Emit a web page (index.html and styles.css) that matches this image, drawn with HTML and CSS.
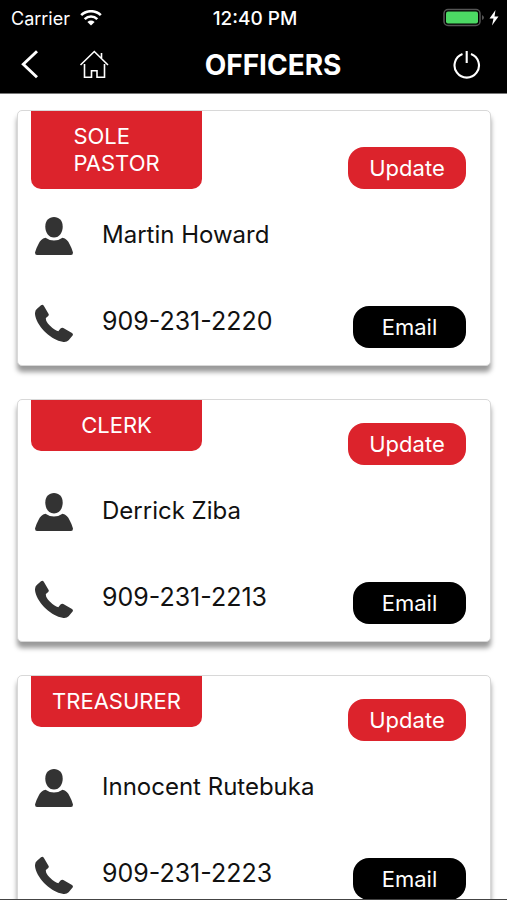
FILE: index.html
```html
<!DOCTYPE html>
<html lang="en">
<head>
<meta charset="utf-8">
<meta name="viewport" content="width=device-width, initial-scale=1">
<title>Officers</title>
<link rel="stylesheet" href="styles.css">
</head>
<body>
<svg class="sprite" aria-hidden="true">
  <symbol id="person" viewBox="0 0 38 38">
    <path d="M19 0C24 0 27.700 3.500 27.700 9.500C27.700 15.500 24.500 20.500 19 20.500S10.300 15.500 10.300 9.500C10.300 3.500 14 0 19 0Z"/>
    <path d="M10.500 20.800Q14 23.500 19 23.500T27.500 20.800Q32.500 22 34.500 27Q37 31.500 38 35.500Q38 38 36 38H2Q0 38 0 35.500Q1 31.500 3.500 27Q5.500 22 10.500 20.800Z"/>
  </symbol>
  <symbol id="phone" viewBox="0 0 38 38">
    <path d="M6 1.300Q7.500.200 8.800 1.700L13.600 10Q14.200 11.200 13.200 12L10.900 14.100Q10.400 17 14.500 21.200Q19.500 26.300 23.300 27.300L25.500 24.500Q26.800 23.500 28.300 24L37 29Q38.500 30.200 37.600 31.500L33.600 36.300Q31.500 38.500 27.500 37.800C17 36 3 24 .3 12Q-.8 7 2 4.700Z"/>
  </symbol>
</svg>
<div class="app">
  <header class="topbar">
    <div class="status">
      <div class="status-left">
        <span>Carrier</span>
        <svg class="wifi" viewBox="0 0 22 16" aria-hidden="true">
          <path d="M1.200 5.200C6.500-.1 15.500-.1 20.800 5.200M4.700 9.100C8.300 5.600 13.700 5.600 17.300 9.100" fill="none" stroke="#fff" stroke-width="2.600"/>
          <path d="M11 15.500L7.400 12Q11 9.200 14.600 12Z" fill="#fff"/>
        </svg>
      </div>
      <time class="clock">12:40 PM</time>
      <div class="status-right">
        <svg class="battery" viewBox="0 0 56 20" aria-hidden="true">
          <rect x="1" y="1.500" width="36" height="16" rx="4" fill="none" stroke="#555" stroke-width="1.500"/>
          <rect x="3" y="3.500" width="32" height="12" rx="2" fill="#4cd964"/>
          <path d="M39 7Q41 8 41 9.500T39 12Z" fill="#555"/>
          <path d="M52.500 2L46.500 10.500H50.500L49 17.500L55.500 8.500H51.500Z" fill="#fff"/>
        </svg>
      </div>
    </div>
    <nav class="nav">
      <div class="nav-left">
        <button class="icon-button" type="button" aria-label="Back">
          <svg class="back" viewBox="0 0 18 30" aria-hidden="true"><path d="M17 1.200L3.300 14.200L17 27.200" fill="none" stroke="#fff" stroke-width="2.900"/></svg>
        </button>
        <a class="icon-button" href="#" aria-label="Home">
          <svg class="home" viewBox="0 0 30 30" aria-hidden="true"><path d="M1.500 15L15.300 1.500L29 15M22.500 3V8M5.500 14V27.200H12.500V20.700H18V27.200H25.500V14" fill="none" stroke="#fff" stroke-width="1.600"/></svg>
        </a>
      </div>
      <h1 class="title">OFFICERS</h1>
      <button class="icon-button" type="button" aria-label="Sign out">
        <svg class="power" viewBox="0 0 28 30" aria-hidden="true"><path d="M9.500 4A12.200 12.200 0 1 0 18 4M13.700 1V13" fill="none" stroke="#fff" stroke-width="2.100"/></svg>
      </button>
    </nav>
  </header>
  <main class="list">
    <article class="card">
      <div class="head">
        <h2 class="role"><span>SOLE<br>PASTOR</span></h2>
        <button class="pill update" type="button">Update</button>
      </div>
      <div class="row">
        <svg class="icon" aria-hidden="true"><use href="#person"/></svg>
        <span class="name">Martin Howard</span>
      </div>
      <div class="row contact">
        <svg class="icon" aria-hidden="true"><use href="#phone"/></svg>
        <span class="phone">909-231-2220</span>
        <button class="pill email" type="button">Email</button>
      </div>
    </article>
    <article class="card">
      <div class="head">
        <h2 class="role"><span>CLERK</span></h2>
        <button class="pill update" type="button">Update</button>
      </div>
      <div class="row">
        <svg class="icon" aria-hidden="true"><use href="#person"/></svg>
        <span class="name">Derrick Ziba</span>
      </div>
      <div class="row contact">
        <svg class="icon" aria-hidden="true"><use href="#phone"/></svg>
        <span class="phone">909-231-2213</span>
        <button class="pill email" type="button">Email</button>
      </div>
    </article>
    <article class="card">
      <div class="head">
        <h2 class="role"><span>TREASURER</span></h2>
        <button class="pill update" type="button">Update</button>
      </div>
      <div class="row">
        <svg class="icon" aria-hidden="true"><use href="#person"/></svg>
        <span class="name">Innocent Rutebuka</span>
      </div>
      <div class="row contact">
        <svg class="icon" aria-hidden="true"><use href="#phone"/></svg>
        <span class="phone">909-231-2223</span>
        <button class="pill email" type="button">Email</button>
      </div>
    </article>
  </main>
</div>
</body>
</html>
```
FILE: styles.css
```css
* {
  box-sizing: border-box;
}

body {
  margin: 0;
  background: #fff;
  color: #111;
  font-family: Inter, "Liberation Sans", sans-serif;
}

svg {
  display: block;
}

.sprite {
  display: none;
}

.app {
  display: flex;
  flex-direction: column;
  height: 100vh;
  border-bottom: 1px solid #444;
}

.topbar {
  flex: none;
  background: #000;
  color: #fff;
  border-bottom: 1px solid #777;
}

.status {
  display: grid;
  grid-template-columns: 1fr auto 1fr;
  align-items: center;
  height: 36px;
  padding: 0 8px 0 11px;
  font-size: 18px;
}

.status-left {
  display: flex;
  align-items: center;
  gap: 10px;
}

.wifi {
  width: 22px;
  height: 16px;
}

.clock {
  font-size: 19px;
  font-weight: 500;
}

.status-right {
  justify-self: end;
}

.battery {
  width: 56px;
  height: 20px;
}

.nav {
  display: flex;
  align-items: center;
  height: 57px;
  padding: 0 26px 0 20px;
}

.nav-left {
  display: flex;
  align-items: center;
  gap: 41px;
}

.icon-button {
  padding: 0;
  border: 0;
  background: none;
}

.back {
  width: 18px;
  height: 30px;
}

.home {
  width: 30px;
  height: 30px;
}

.power {
  width: 28px;
  height: 30px;
}

.title {
  flex: 1;
  margin: 0;
  padding-right: 16px;
  font-size: 28px;
  font-weight: 700;
  text-align: center;
}

.list {
  flex: 1;
  display: flex;
  flex-direction: column;
  gap: 33px;
  min-height: 0;
  padding: 16px 16px 33px 17px;
  overflow-y: auto;
  scrollbar-width: none;
}

.card {
  flex: none;
  padding-bottom: 17px;
  border: 1px solid #d8d8d8;
  border-radius: 5px;
  background: #fff;
  box-shadow: 0 6px 5px rgba(0, 0, 0, 0.4);
}

.head {
  display: flex;
  align-items: flex-start;
  justify-content: space-between;
  min-height: 65px;
  padding: 0 24px 0 13px;
}

.role {
  display: flex;
  justify-content: center;
  width: 171px;
  margin: 0;
  padding: 12px 0;
  border-radius: 0 0 10px 10px;
  background: #dc232c;
  color: #fff;
  font-size: 22px;
  font-weight: 400;
  line-height: 27px;
}

.pill {
  align-self: flex-end;
  height: 42px;
  padding: 0;
  border: 0;
  border-radius: 16px;
  color: #fff;
  font-family: inherit;
  font-size: 22px;
}

.update {
  width: 118px;
  background: #dc232c;
}

.email {
  width: 113px;
  margin-left: auto;
  background: #000;
}

.row {
  display: flex;
  align-items: flex-start;
  gap: 29px;
  padding: 28px 24px 0 17px;
}

.contact {
  padding-top: 49px;
}

.contact .pill {
  margin-top: 2px;
}

.icon {
  width: 38px;
  height: 38px;
  fill: #333;
}

.name,
.phone {
  line-height: 35px;
}

.name {
  font-size: 24px;
}

.phone {
  font-size: 25px;
}
```
